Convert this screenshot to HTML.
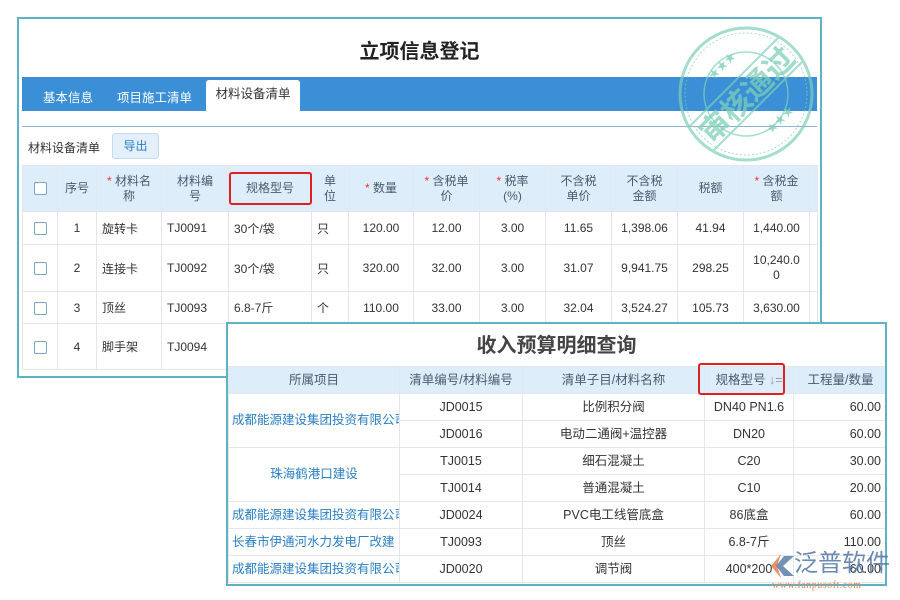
<!DOCTYPE html>
<html><head><meta charset="utf-8"><style>
*{box-sizing:border-box;margin:0;padding:0}
body{width:900px;height:600px;background:#fff;position:relative;overflow:hidden;font-family:"Liberation Sans","Noto Sans CJK SC",sans-serif;font-size:12px;color:#333}
.abs{position:absolute}
#p1{left:17px;top:17px;width:805px;height:361px;border:2px solid #5db3c4;background:#fff;overflow:hidden}
#p2{left:226px;top:322px;width:661px;height:264px;border:2px solid #5db3c4;background:#fff;overflow:hidden}
table{border-collapse:collapse;table-layout:fixed;position:absolute}
td,th{border:1px solid #e3e6ea;text-align:center;font-weight:normal;overflow:hidden;white-space:nowrap;padding:0}
th{background:#deedfa;color:#4b5a6c;line-height:15px}
.r{color:#e33}
.cb{display:inline-block;width:13px;height:13px;border:1px solid #7aa3c6;border-radius:2px;background:#fff;vertical-align:middle}
.l{text-align:left;padding-left:5px}
.lk{color:#2a7fc4}
#t2 td,#t2 th{line-height:15px;font-size:12.5px}
#t2 td.lk{text-overflow:clip}
</style></head><body>
<div id="p1" class="abs">
 <div class="abs" style="left:0;width:801px;top:16px;text-align:center;font-size:20px;font-weight:bold;color:#222">立项信息登记</div>
 <div class="abs" style="left:3px;top:58px;width:795px;height:34px;background:#3a8fd6"></div>
 <div class="abs" style="left:24px;top:68px;color:#fff;font-size:12.5px">基本信息</div>
 <div class="abs" style="left:98px;top:68px;color:#fff;font-size:12.5px">项目施工清单</div>
 <div class="abs" style="left:187px;top:61px;width:94px;height:31px;background:#fff;border-radius:3px 3px 0 0;text-align:center;line-height:28px;font-size:12.5px">材料设备清单</div>
 <div class="abs" style="left:3px;top:107px;width:795px;height:1px;background:#8fb3cc"></div>
 <div class="abs" style="left:9px;top:120px;font-size:12px">材料设备清单</div>
 <div class="abs" style="left:93px;top:114px;width:47px;height:26px;background:#e3effa;border:1px solid #c4daee;border-radius:3px;color:#2a7fc4;text-align:center;line-height:24px">导出</div>
 <table style="left:3px;top:146px;width:795px">
  <colgroup><col style="width:35px"><col style="width:39px"><col style="width:65px"><col style="width:67px"><col style="width:83px"><col style="width:37px"><col style="width:65px"><col style="width:66px"><col style="width:66px"><col style="width:66px"><col style="width:66px"><col style="width:66px"><col style="width:66px"><col style="width:8px"></colgroup>
  <tr style="height:46px"><th><span class="cb"></span></th><th>序号</th><th><span class="r">*</span> 材料名<br>称</th><th>材料编<br>号</th><th>规格型号</th><th>单<br>位</th><th><span class="r">*</span> 数量</th><th><span class="r">*</span> 含税单<br>价</th><th><span class="r">*</span> 税率<br>(%)</th><th>不含税<br>单价</th><th>不含税<br>金额</th><th>税额</th><th><span class="r">*</span> 含税金<br>额</th><th></th></tr>
  <tr style="height:33px"><td><span class="cb"></span></td><td>1</td><td class="l">旋转卡</td><td class="l">TJ0091</td><td class="l">30个/袋</td><td class="l">只</td><td>120.00</td><td>12.00</td><td>3.00</td><td>11.65</td><td>1,398.06</td><td>41.94</td><td>1,440.00</td><td></td></tr>
  <tr style="height:47px"><td><span class="cb"></span></td><td>2</td><td class="l">连接卡</td><td class="l">TJ0092</td><td class="l">30个/袋</td><td class="l">只</td><td>320.00</td><td>32.00</td><td>3.00</td><td>31.07</td><td>9,941.75</td><td>298.25</td><td style="white-space:normal;line-height:15px">10,240.0<br>0</td><td></td></tr>
  <tr style="height:32px"><td><span class="cb"></span></td><td>3</td><td class="l">顶丝</td><td class="l">TJ0093</td><td class="l">6.8-7斤</td><td class="l">个</td><td>110.00</td><td>33.00</td><td>3.00</td><td>32.04</td><td>3,524.27</td><td>105.73</td><td>3,630.00</td><td></td></tr>
  <tr style="height:46px"><td><span class="cb"></span></td><td>4</td><td class="l">脚手架</td><td class="l">TJ0094</td><td></td><td></td><td></td><td></td><td></td><td></td><td></td><td></td><td></td><td></td></tr>
 </table>
 <div class="abs" style="left:210px;top:153px;width:83px;height:33px;border:2px solid #e02020;border-radius:3px"></div>
</div>
<svg class="abs" style="left:670px;top:20px" width="150" height="148" viewBox="0 0 150 148">
 <g fill="none" stroke="#7fd0b8" opacity="0.7">
  <circle cx="76" cy="74" r="66" stroke-width="3"/>
  <circle cx="76" cy="74" r="61" stroke-width="1" stroke-dasharray="2 2"/>
  <circle cx="76" cy="74" r="42" stroke-width="1.5"/>
  <line x1="19" y1="107" x2="109" y2="17" stroke-width="2"/>
  <line x1="43" y1="131" x2="133" y2="41" stroke-width="2"/>
 </g>
 <text x="76" y="86" transform="rotate(-45 76 74)" text-anchor="middle" font-size="30" font-weight="bold" fill="#7fd0b8" opacity="0.75" font-family="Noto Sans CJK SC,sans-serif">审核通过</text>
 <text x="43" y="60" font-size="11" fill="#7fd0b8" opacity="0.8" transform="rotate(-45 43 60)">★★★</text>
 <text x="101" y="114" font-size="11" fill="#7fd0b8" opacity="0.8" transform="rotate(-45 101 114)">★★★</text>
</svg>
<div id="p2" class="abs">
 <div class="abs" style="left:0;width:657px;top:5px;text-align:center;font-size:20px;font-weight:bold;color:#444">收入预算明细查询</div>
 <table id="t2" style="left:0;top:42px;width:659px">
  <colgroup><col style="width:171px"><col style="width:123px"><col style="width:182px"><col style="width:89px"><col style="width:94px"></colgroup>
  <tr style="height:27px"><th>所属项目</th><th>清单编号/材料编号</th><th>清单子目/材料名称</th><th>规格型号 <span style="color:#999">↓=</span></th><th>工程量/数量</th></tr>
  <tr style="height:27px"><td rowspan="2" class="l lk" style="padding-left:3px">成都能源建设集团投资有限公司</td><td>JD0015</td><td>比例积分阀</td><td>DN40 PN1.6</td><td style="text-align:right;padding-right:6px">60.00</td></tr>
  <tr style="height:27px"><td>JD0016</td><td>电动二通阀+温控器</td><td>DN20</td><td style="text-align:right;padding-right:6px">60.00</td></tr>
  <tr style="height:27px"><td rowspan="2" class="lk">珠海鹤港口建设</td><td>TJ0015</td><td>细石混凝土</td><td>C20</td><td style="text-align:right;padding-right:6px">30.00</td></tr>
  <tr style="height:27px"><td>TJ0014</td><td>普通混凝土</td><td>C10</td><td style="text-align:right;padding-right:6px">20.00</td></tr>
  <tr style="height:27px"><td class="l lk" style="padding-left:3px">成都能源建设集团投资有限公司</td><td>JD0024</td><td>PVC电工线管底盒</td><td>86底盒</td><td style="text-align:right;padding-right:6px">60.00</td></tr>
  <tr style="height:27px"><td class="l lk" style="padding-left:3px">长春市伊通河水力发电厂改建</td><td>TJ0093</td><td>顶丝</td><td>6.8-7斤</td><td style="text-align:right;padding-right:6px">110.00</td></tr>
  <tr style="height:27px"><td class="l lk" style="padding-left:3px">成都能源建设集团投资有限公司</td><td>JD0020</td><td>调节阀</td><td>400*200</td><td style="text-align:right;padding-right:6px">60.00</td></tr>
 </table>
 <div class="abs" style="left:470px;top:39px;width:87px;height:32px;border:2px solid #e02020;border-radius:3px"></div>
</div>
<svg class="abs" style="left:768px;top:553px" width="28" height="26" viewBox="0 0 28 26"><path d="M13 1 L3 13 L13 25 L9 13 Z" fill="#e2855a" opacity="0.9"/><path d="M16 3 L26 3 L15 13 L26 23 L16 23 L8 13 Z" fill="#5b7ea8" opacity="0.85"/></svg>
<div class="abs" style="left:794px;top:550px;font-size:24px;line-height:28px;color:#5b7ea8;opacity:0.9;white-space:nowrap;letter-spacing:0px">泛普软件</div>
<div class="abs" style="left:772px;top:580px;font-size:10px;color:#e2855a;font-family:'Liberation Serif',serif;white-space:nowrap;letter-spacing:0.5px">www.fanpusoft.com</div>
</body></html>
